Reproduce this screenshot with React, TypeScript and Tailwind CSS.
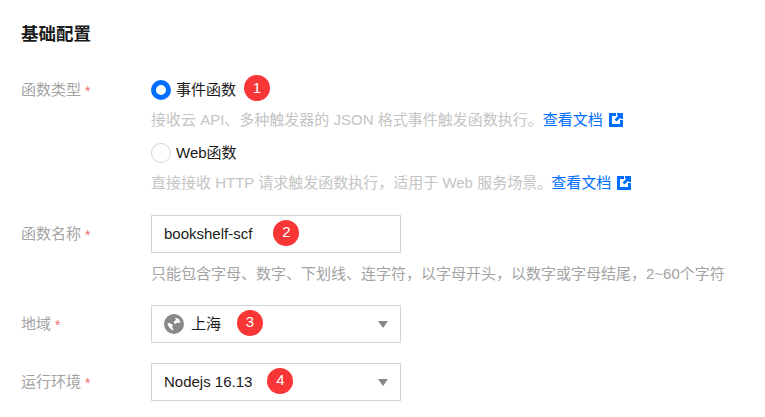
import React from "react";

const FONT = "font-['Liberation_Sans','Noto_Sans_CJK_SC',sans-serif]";

function Badge({ n, className = "" }: { n: number; className?: string }) {
  return (
    <span
      className={`flex h-[26px] w-[26px] shrink-0 items-center justify-center rounded-full bg-[#f93636] pb-[2px] text-[15px] leading-none text-white ${className}`}
    >
      {n}
    </span>
  );
}

function FormRow({
  label,
  className = "",
  children,
}: {
  label: string;
  className?: string;
  children: React.ReactNode;
}) {
  return (
    <div className={`flex ${className}`}>
      <div className="flex h-[38px] w-[130px] shrink-0 items-center text-[15px] text-[#a3a3a3]">
        {label}
        <span className="ml-[4px] mt-[2px] text-[14px] text-[#f26d6d]">*</span>
      </div>
      <div>{children}</div>
    </div>
  );
}

function ExternalIcon() {
  return (
    <svg viewBox="0 0 14 14" className="ml-[6px] h-[14px] w-[14px] shrink-0">
      <path fill="#006eff" d="M0 0h7v3H3v8h8V7h3v7H0z" />
      <path fill="#006eff" d="M8 0h6v6h-2l-1-1-3.500 3.500-2-2L9 3 8 2z" />
    </svg>
  );
}

function DocLink({ className = "" }: { className?: string }) {
  return (
    <a className={`flex items-center text-[#006eff] ${className}`}>
      查看文档
      <ExternalIcon />
    </a>
  );
}

function Hint({ children }: { children: React.ReactNode }) {
  return (
    <div className="flex h-[24px] items-center whitespace-nowrap text-[15px] text-[#c4c4c4]">
      {children}
    </div>
  );
}

function Caret() {
  return (
    <span className="ml-auto h-0 w-0 border-x-[5px] border-t-[7px] border-x-transparent border-t-[#888888]" />
  );
}

function GlobeIcon() {
  return (
    <svg viewBox="0 0 20 20" className="mr-[7px] h-[20px] w-[20px] shrink-0">
      <circle cx="10" cy="10" r="10" fill="#888888" />
      <path
        fill="#ffffff"
        d="M3.500 9C4 13 7 16 10 16.500L8 13l1-2-3.500-2zM11 3.500 15 5l1.500 4-3-.5L11 10 9.500 8 12 6z"
      />
    </svg>
  );
}

export default function App() {
  return (
    <div className={`h-[417px] w-[765px] overflow-hidden bg-white pl-[21px] ${FONT}`}>
      <h2 className="flex h-[24px] mt-[22px] items-center text-[17.5px] font-bold text-[#1a1a1a]">
        基础配置
      </h2>

      <FormRow label="函数类型" className="mt-[25px]">
        <div className="flex h-[38px] items-center">
          <span className="h-[20px] w-[20px] rounded-full border-[5px] border-[#006eff] bg-white" />
          <span className="ml-[5px] text-[15px] text-[#1a1a1a]">事件函数</span>
          <Badge n={1} className="ml-[8px] -mt-[4px]" />
        </div>
        <div className="-mt-[1px]">
          <Hint>
            接收云 API、多种触发器的 JSON 格式事件触发函数执行。
            <DocLink />
          </Hint>
        </div>
        <div className="mt-[7px] flex h-[28px] items-center">
          <span className="h-[20px] w-[20px] rounded-full border border-[#cfd5de] bg-white" />
          <span className="ml-[5px] text-[15px] text-[#1a1a1a]">Web函数</span>
        </div>
        <div className="mt-[4px]">
          <Hint>
            直接接收 HTTP 请求触发函数执行，适用于 Web 服务场景。
            <DocLink className="-ml-[1px]" />
          </Hint>
        </div>
      </FormRow>

      <FormRow label="函数名称" className="mt-[20px]">
        <div className="flex h-[38px] w-[250px] items-center border border-[#cfd5de] pl-[12px] text-[15px] text-[#1a1a1a]">
          bookshelf-scf
          <Badge n={2} className="ml-[21px] -mt-[3px]" />
        </div>
        <div className="mt-[9px]">
          <Hint>
            <span className="text-[#a3a3a3]">
              只能包含字母、数字、下划线、连字符，以字母开头，以数字或字母结尾，2~60个字符
            </span>
          </Hint>
        </div>
      </FormRow>

      <FormRow label="地域" className="mt-[19px]">
        <div className="flex h-[38px] w-[250px] items-center border border-[#cfd5de] pl-[12px] pr-[12px] text-[15px] text-[#1a1a1a]">
          <GlobeIcon />
          上海
          <Badge n={3} className="ml-[16px] -mt-[3px]" />
          <Caret />
        </div>
      </FormRow>

      <FormRow label="运行环境" className="mt-[20px]">
        <div className="flex h-[38px] w-[250px] items-center border border-[#cfd5de] pl-[12px] pr-[12px] text-[15px] text-[#1a1a1a]">
          Nodejs 16.13
          <Badge n={4} className="ml-[15px] -mt-[3px]" />
          <Caret />
        </div>
      </FormRow>
    </div>
  );
}
